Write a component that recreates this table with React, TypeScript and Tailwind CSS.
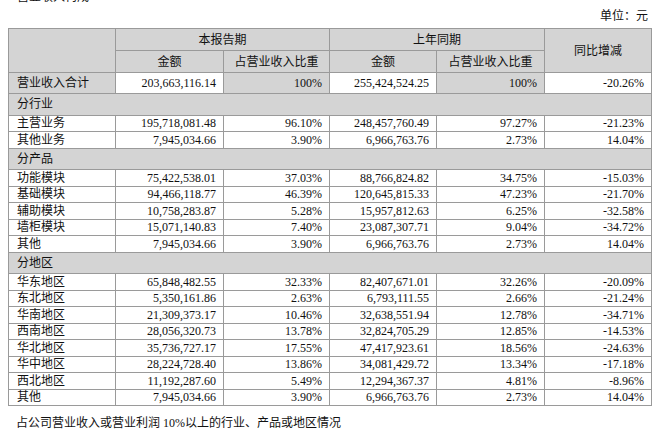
const serif = "font-['Liberation_Serif','Noto_Sans_CJK_SC',serif]";

type Row =
  | { kind: "section"; label: string }
  | { kind: "data"; label: string; a: string; ap: string; b: string; bp: string; yoy: string };

const rows: Row[] = [
  { kind: "section", label: "分行业" },
  { kind: "data", label: "主营业务", a: "195,718,081.48", ap: "96.10%", b: "248,457,760.49", bp: "97.27%", yoy: "-21.23%" },
  { kind: "data", label: "其他业务", a: "7,945,034.66", ap: "3.90%", b: "6,966,763.76", bp: "2.73%", yoy: "14.04%" },
  { kind: "section", label: "分产品" },
  { kind: "data", label: "功能模块", a: "75,422,538.01", ap: "37.03%", b: "88,766,824.82", bp: "34.75%", yoy: "-15.03%" },
  { kind: "data", label: "基础模块", a: "94,466,118.77", ap: "46.39%", b: "120,645,815.33", bp: "47.23%", yoy: "-21.70%" },
  { kind: "data", label: "辅助模块", a: "10,758,283.87", ap: "5.28%", b: "15,957,812.63", bp: "6.25%", yoy: "-32.58%" },
  { kind: "data", label: "墙柜模块", a: "15,071,140.83", ap: "7.40%", b: "23,087,307.71", bp: "9.04%", yoy: "-34.72%" },
  { kind: "data", label: "其他", a: "7,945,034.66", ap: "3.90%", b: "6,966,763.76", bp: "2.73%", yoy: "14.04%" },
  { kind: "section", label: "分地区" },
  { kind: "data", label: "华东地区", a: "65,848,482.55", ap: "32.33%", b: "82,407,671.01", bp: "32.26%", yoy: "-20.09%" },
  { kind: "data", label: "东北地区", a: "5,350,161.86", ap: "2.63%", b: "6,793,111.55", bp: "2.66%", yoy: "-21.24%" },
  { kind: "data", label: "华南地区", a: "21,309,373.17", ap: "10.46%", b: "32,638,551.94", bp: "12.78%", yoy: "-34.71%" },
  { kind: "data", label: "西南地区", a: "28,056,320.73", ap: "13.78%", b: "32,824,705.29", bp: "12.85%", yoy: "-14.53%" },
  { kind: "data", label: "华北地区", a: "35,736,727.17", ap: "17.55%", b: "47,417,923.61", bp: "18.56%", yoy: "-24.63%" },
  { kind: "data", label: "华中地区", a: "28,224,728.40", ap: "13.86%", b: "34,081,429.72", bp: "13.34%", yoy: "-17.18%" },
  { kind: "data", label: "西北地区", a: "11,192,287.60", ap: "5.49%", b: "12,294,367.37", bp: "4.81%", yoy: "-8.96%" },
  { kind: "data", label: "其他", a: "7,945,034.66", ap: "3.90%", b: "6,966,763.76", bp: "2.73%", yoy: "14.04%" },
];

const cell = "border border-[#9a9a9a] p-0 leading-none";

export default function App() {
  return (
    <div className={`w-[670px] h-[429px] overflow-hidden bg-white text-[12px] text-[#111] ${serif}`}>
      <div className="-mt-[10px] h-[14px] pl-[17px] leading-[14px]">营业收入构成</div>
      <div className="flex h-[24px] items-center justify-end pr-[22px]">单位：元</div>

      <table className="ml-[8px] w-[643px] table-fixed border-collapse">
        <colgroup>
          <col className="w-[107px]" />
          <col className="w-[108px]" />
          <col className="w-[106px]" />
          <col className="w-[107px]" />
          <col className="w-[108px]" />
          <col className="w-[107px]" />
        </colgroup>
        <thead>
          <tr className="h-[22px] bg-[#d4d4d4]">
            <th rowSpan={2} className={cell} />
            <th colSpan={2} className={`${cell} text-center font-normal`}>本报告期</th>
            <th colSpan={2} className={`${cell} text-center font-normal`}>上年同期</th>
            <th rowSpan={2} className={`${cell} text-center font-normal`}>同比增减</th>
          </tr>
          <tr className="h-[22px] bg-[#d4d4d4]">
            <th className={`${cell} text-center font-normal`}>金额</th>
            <th className={`${cell} text-center font-normal`}>占营业收入比重</th>
            <th className={`${cell} text-center font-normal`}>金额</th>
            <th className={`${cell} text-center font-normal`}>占营业收入比重</th>
          </tr>
        </thead>
        <tbody>
          <tr className="h-[21px]">
            <td className={`${cell} bg-[#d4d4d4] pl-[8px]`}>营业收入合计</td>
            <td className={`${cell} pr-[7px] text-right`}>203,663,116.14</td>
            <td className={`${cell} bg-[#d4d4d4] pr-[7px] text-right`}>100%</td>
            <td className={`${cell} pr-[7px] text-right`}>255,424,524.25</td>
            <td className={`${cell} bg-[#d4d4d4] pr-[7px] text-right`}>100%</td>
            <td className={`${cell} pr-[7px] text-right`}>-20.26%</td>
          </tr>
          {rows.map((r, i) =>
            r.kind === "section" ? (
              <tr key={i} className="h-[21.5px] bg-[#d4d4d4]">
                <td colSpan={6} className={`${cell} pl-[8px]`}>
                  {r.label}
                </td>
              </tr>
            ) : (
              <tr key={i} className="h-[16.5px]">
                <td className={`${cell} pl-[8px]`}>{r.label}</td>
                <td className={`${cell} pr-[7px] text-right`}>{r.a}</td>
                <td className={`${cell} pr-[7px] text-right`}>{r.ap}</td>
                <td className={`${cell} pr-[7px] text-right`}>{r.b}</td>
                <td className={`${cell} pr-[7px] text-right`}>{r.bp}</td>
                <td className={`${cell} pr-[7px] text-right`}>{r.yoy}</td>
              </tr>
            )
          )}
        </tbody>
      </table>

      <div className="mt-[8px] pl-[16px]">占公司营业收入或营业利润 10%以上的行业、产品或地区情况</div>
    </div>
  );
}
